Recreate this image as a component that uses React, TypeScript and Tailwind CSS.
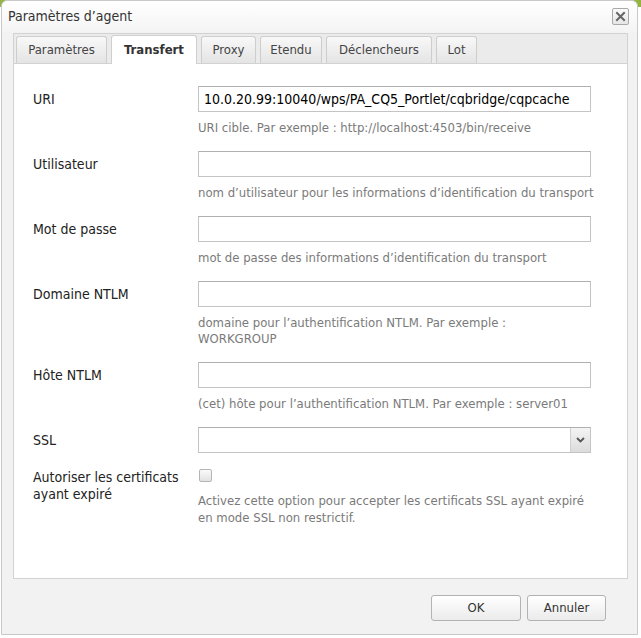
import React from "react";

const tabs: { label: string; w: string; active?: boolean }[] = [
  { label: "Paramètres", w: "w-[91px]" },
  { label: "Transfert", w: "w-[86px]", active: true },
  { label: "Proxy", w: "w-[55px]" },
  { label: "Etendu", w: "w-[62px]" },
  { label: "Déclencheurs", w: "w-[106px]" },
  { label: "Lot", w: "w-[41px]" },
];

function Field({
  label,
  value,
  hint,
}: {
  label: string;
  value?: string;
  hint?: React.ReactNode;
}) {
  return (
    <div className="flex mb-[15px]">
      <div className="w-[165px] shrink-0 leading-[26px] text-[14px] text-[#222]">{label}</div>
      <div className="flex flex-col">
        <div className="w-[393px] h-[26px] border border-[#c4c4c4] border-t-[#b0b0b0] bg-white flex items-center pl-[5px] text-[14px] text-black whitespace-nowrap overflow-hidden">
          {value}
        </div>
        {hint && (
          <div className="mt-[8px] leading-[16px] text-[13px] text-[#7a7a7a] whitespace-nowrap">{hint}</div>
        )}
      </div>
    </div>
  );
}

export default function App() {
  return (
    <div className="w-[641px] h-[638px] bg-[linear-gradient(to_bottom,#93b43f_0px,#93b43f_7px,#ffffff_7px)] font-['DejaVu_Sans_Condensed','DejaVu_Sans',sans-serif]">
      <div className="ml-[1px] w-[637px] h-[635px] border border-[#c9c9c9] rounded-t-[6px] bg-[#f2f2f2] flex flex-col">
        {/* title bar */}
        <div className="h-[31px] flex items-center pl-[6px] pr-[8px] rounded-t-[6px] bg-[linear-gradient(to_bottom,#ffffff,#f4f4f4)]">
          <span className="text-[14px] text-[#333]">Paramètres d’agent</span>
          <div className="ml-auto w-[17px] h-[17px] border border-[#a9a9a9] rounded-[2px] bg-[linear-gradient(to_bottom,#fbfbfb,#e6e6e6)] flex items-center justify-center">
            <svg width="11" height="11" viewBox="0 0 11 11">
              <path d="M2 2 L9 9 M9 2 L2 9" stroke="#666" strokeWidth="2" strokeLinecap="square" />
            </svg>
          </div>
        </div>

        {/* tab panel */}
        <div className="ml-[11px] mr-[9px] mt-[1px] flex flex-col">
          <div className="h-[31px] border border-[#d2d2d2] bg-[#ebebeb] flex items-end gap-[4px] pl-[2px]">
            {tabs.map((t) =>
              t.active ? (
                <div
                  key={t.label}
                  className={`${t.w} h-[29px] -mb-px relative border border-[#cfcfcf] border-b-0 rounded-t-[3px] bg-white flex items-center justify-center text-[13px] font-bold text-[#333]`}
                >
                  {t.label}
                </div>
              ) : (
                <div
                  key={t.label}
                  className={`${t.w} h-[27px] border border-[#cdcdcd] border-b-0 rounded-t-[3px] bg-[linear-gradient(to_bottom,#f8f8f8,#e4e4e4)] flex items-center justify-center text-[13px] text-[#444]`}
                >
                  {t.label}
                </div>
              )
            )}
          </div>
          <div className="h-[515px] border border-t-0 border-[#d2d2d2] bg-white pl-[19px] pt-[22px]">
            <Field
              label="URI"
              value="10.0.20.99:10040/wps/PA_CQ5_Portlet/cqbridge/cqpcache"
              hint="URI cible. Par exemple : http://localhost:4503/bin/receive"
            />
            <Field
              label="Utilisateur"
              hint="nom d’utilisateur pour les informations d’identification du transport"
            />
            <Field label="Mot de passe" hint="mot de passe des informations d’identification du transport" />
            <Field
              label="Domaine NTLM"
              hint={
                <>
                  domaine pour l’authentification NTLM. Par exemple :
                  <br />
                  WORKGROUP
                </>
              }
            />
            <Field label="Hôte NTLM" hint="(cet) hôte pour l’authentification NTLM. Par exemple : server01" />

            {/* SSL select */}
            <div className="flex mb-[16px]">
              <div className="w-[165px] shrink-0 leading-[26px] text-[14px] text-[#222]">SSL</div>
              <div className="w-[393px] h-[26px] border border-[#c4c4c4] border-t-[#b0b0b0] bg-white flex">
                <div className="flex-1" />
                <div className="w-[20px] h-full border-l border-[#cfcfcf] bg-[linear-gradient(to_bottom,#f4f4f4,#dcdcdc)] flex items-center justify-center">
                  <svg width="9" height="6" viewBox="0 0 9 6">
                    <path d="M1 1 L4.5 4.5 L8 1" stroke="#555" strokeWidth="1.8" fill="none" />
                  </svg>
                </div>
              </div>
            </div>

            {/* checkbox row */}
            <div className="flex">
              <div className="w-[165px] shrink-0 leading-[17px] text-[14px] text-[#222]">
                Autoriser les certificats
                <br />
                ayant expiré
              </div>
              <div className="flex flex-col">
                <div className="ml-[1px] w-[13px] h-[13px] border border-[#b5b5b5] rounded-[2px] bg-[linear-gradient(to_bottom,#fafafa,#e2e2e2)]" />
                <div className="mt-[10px] leading-[17px] text-[13px] text-[#7a7a7a] whitespace-nowrap">
                  Activez cette option pour accepter les certificats SSL ayant expiré
                  <br />
                  en mode SSL non restrictif.
                </div>
              </div>
            </div>
          </div>
        </div>

        {/* footer */}
        <div className="flex justify-end gap-[6px] mr-[31px] mt-[16px]">
          <button className="w-[90px] h-[26px] border border-[#b3b3b3] rounded-[3px] bg-[linear-gradient(to_bottom,#ffffff,#ebebeb)] text-[13px] text-[#333]">
            OK
          </button>
          <button className="w-[79px] h-[26px] border border-[#b3b3b3] rounded-[3px] bg-[linear-gradient(to_bottom,#ffffff,#ebebeb)] text-[13px] text-[#333]">
            Annuler
          </button>
        </div>
      </div>
    </div>
  );
}
